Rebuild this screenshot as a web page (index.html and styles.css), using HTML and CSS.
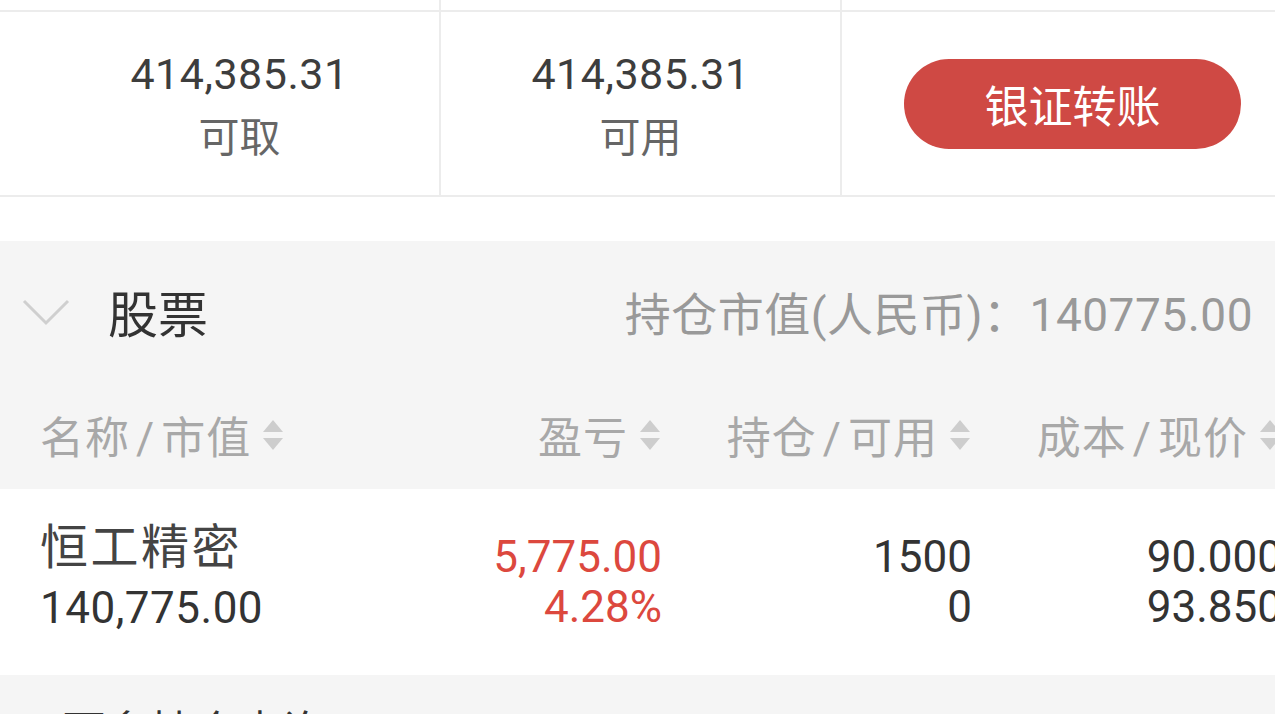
FILE: index.html
```html
<!DOCTYPE html>
<html lang="zh-CN">
<head>
    <meta charset="UTF-8">
    <meta name="viewport" content="width=device-width, initial-scale=1.0">
    <title>持仓</title>
    <link rel="stylesheet" href="styles.css">
</head>
<body>

<div class="page">
    <div class="strip">
        <div class="cell cell-first"></div>
        <div class="cell cell-mid"></div>
        <div class="cell cell-last"></div>
    </div>

    <div class="summary">
        <div class="cell cell-first">
            <div class="amount">414,385.31</div>
            <div class="label">可取</div>
        </div>
        <div class="cell cell-mid">
            <div class="amount">414,385.31</div>
            <div class="label">可用</div>
        </div>
        <div class="cell cell-last">
            <button class="transfer">银证转账</button>
        </div>
    </div>

    <div class="spacer"></div>

    <div class="stocks">
        <div class="stocks-head">
            <div class="stocks-title">
                <svg class="chevron" width="48" height="28" viewBox="0 0 48 28">
                    <polyline points="2,3 24,25 46,3" fill="none" stroke="#cfcfcf" stroke-width="3"/>
                </svg>
                <span>股票</span>
            </div>
            <div class="stocks-total">持仓市值(人民币)：<span class="total-num">140775.00</span></div>
        </div>

        <div class="cols cols-head">
            <div class="th th-left"><span>名称<span class="slash">/</span>市值</span><svg class="sort" width="20" height="30" viewBox="0 0 20 30"><polygon points="10,0 20,12 0,12"/><polygon points="0,18 20,18 10,30"/></svg></div>
            <div class="th"><span>盈亏</span><svg class="sort" width="20" height="30" viewBox="0 0 20 30"><polygon points="10,0 20,12 0,12"/><polygon points="0,18 20,18 10,30"/></svg></div>
            <div class="th"><span>持仓<span class="slash">/</span>可用</span><svg class="sort" width="20" height="30" viewBox="0 0 20 30"><polygon points="10,0 20,12 0,12"/><polygon points="0,18 20,18 10,30"/></svg></div>
            <div class="th"><span>成本<span class="slash">/</span>现价</span><svg class="sort" width="20" height="30" viewBox="0 0 20 30"><polygon points="10,0 20,12 0,12"/><polygon points="0,18 20,18 10,30"/></svg></div>
        </div>
    </div>

    <div class="cols position">
        <div class="td td-left">
            <div class="stock-name">恒工精密</div>
            <div class="stock-value">140,775.00</div>
        </div>
        <div class="td up">
            <div>5,775.00</div>
            <div>4.28%</div>
        </div>
        <div class="td">
            <div>1500</div>
            <div>0</div>
        </div>
        <div class="td">
            <div>90.000</div>
            <div>93.850</div>
        </div>
    </div>

    <div class="more">更多持仓查询</div>
</div>

</body>
</html>
```

FILE: styles.css
```css
:root {
    --line-color: #ececec;
    --gray-bg: #f5f5f5;
    --text-color: #333;
    --label-color: #666;
    --muted-color: #999;
    --head-color: #a8a8a8;
    --red: #dc483e;
    --button-red: #cf4944;
}

body {
    margin: 0;
    background: #fff;
    font-family: Roboto, "Noto Sans CJK SC", sans-serif;
    color: var(--text-color);
    overflow: hidden;
}

.page {
    width: 1282px;
    height: 714px;
    overflow: hidden;
}

/* top account cells */
.strip,
.summary {
    display: flex;
    border-bottom: 2px solid var(--line-color);
}

.strip {
    height: 10px;
}

.summary {
    height: 183px;
}

.cell {
    display: flex;
    flex-direction: column;
    justify-content: center;
    align-items: center;
}

.summary .cell {
    padding-top: 8px;
}

.cell-first {
    width: 399px;
    padding-left: 40px;
    border-right: 2px solid var(--line-color);
}

.cell-mid {
    width: 399px;
    border-right: 2px solid var(--line-color);
}

.cell-last {
    flex: 1;
    align-items: flex-start;
}

.summary .cell-last {
    padding-top: 0;
}

.amount {
    font-size: 43px;
    line-height: 56px;
    letter-spacing: 0.5px;
    color: #3d3d3d;
}

.label {
    margin-top: 4px;
    font-size: 41px;
    line-height: 64px;
    color: var(--label-color);
}

.transfer {
    margin-left: 62px;
    width: 337px;
    height: 90px;
    border: none;
    border-radius: 45px;
    background: var(--button-red);
    color: #fff;
    font-family: inherit;
    font-size: 44px;
    cursor: pointer;
}

.spacer {
    height: 44px;
}

/* stock section */
.stocks {
    background: var(--gray-bg);
}

.stocks-head {
    height: 140px;
    display: flex;
    justify-content: space-between;
    align-items: center;
    padding: 0 29px 0 22px;
}

.stocks-title {
    display: flex;
    align-items: center;
    gap: 38px;
    font-size: 50px;
}

.chevron {
    margin-top: 2px;
}

.stocks-total {
    font-size: 46px;
    letter-spacing: 0.5px;
    color: var(--muted-color);
}

.total-num {
    letter-spacing: 0.5px;
}

.cols {
    display: grid;
    grid-template-columns: 1fr 300px 310px 310px;
    padding-left: 40px;
    align-items: center;
}

.cols-head {
    height: 108px;
}

.th {
    display: flex;
    justify-content: flex-end;
    align-items: center;
    gap: 12px;
    font-size: 44px;
    letter-spacing: 1px;
    color: var(--head-color);
    padding-right: 2px;
}

.th .slash {
    margin: 0 6px;
}

.th-left {
    justify-content: flex-start;
}

.sort {
    fill: #cdcdcd;
}

.position {
    height: 186px;
    background: #fff;
}

.td {
    text-align: right;
    font-size: 44px;
    line-height: 50px;
}

.td-left {
    text-align: left;
    margin-bottom: 8px;
}

.stock-name {
    font-size: 48px;
    line-height: 60px;
    letter-spacing: 2.5px;
    color: #444;
}

.stock-value {
    line-height: 60px;
    letter-spacing: 0.5px;
}

.up {
    color: var(--red);
}

.more {
    background: var(--gray-bg);
    padding: 22px 0 0 62px;
    height: 80px;
    font-size: 44px;
}
```
